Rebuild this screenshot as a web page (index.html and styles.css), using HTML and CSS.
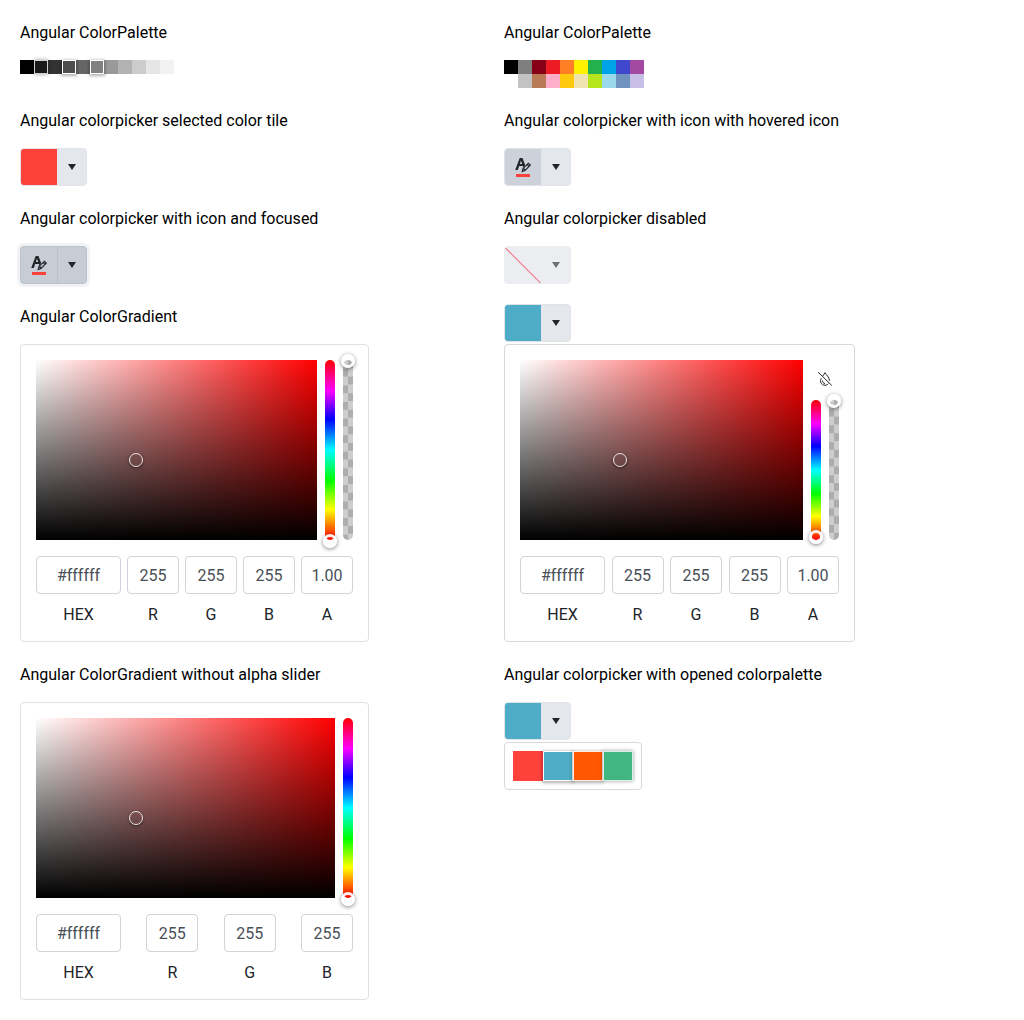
FILE: index.html
```html
<!DOCTYPE html>
<html lang="en">
<head>
<meta charset="utf-8">
<title>Angular color components</title>
<link rel="stylesheet" href="styles.css">
</head>
<body>
<svg class="defs" width="0" height="0">
  <symbol id="font-color" viewBox="0 0 16 20">
    <path d="M.2 13 4.700 1h2.800l2.700 7.300-1.900 1.900-.5-1.200H4.100L2.800 13zM4.900 7h2.300L6 3.500z" fill="currentColor"/>
    <path d="M7.300 14.500l.8-3.100 5.300-5.100 1.900 1.900-5.300 5.300zM8.500 11.500l1.500 1.500M12.300 7.600l1.700 1.700" fill="none" stroke="currentColor" stroke-width="1.150"/>
    <path class="bar" d="M1 17h14v3H1z"/>
  </symbol>
  <symbol id="droplet-slash" viewBox="0 0 16 16">
    <path d="M5.700 5.100C6.500 3.800 7.400 2.700 8 1.700c1.700 2.600 4.500 5 4.500 8M11.300 12.700C9.500 15.200 3.500 14.900 3.500 9.700c0-.8.300-1.700.8-2.500M5.500 9.500c0 2 1.100 3 2.500 3M1.200 1.200l13.600 13.300" fill="none" stroke="currentColor"/>
  </symbol>
</svg>
<main class="grid">
  <section>
    <h2>Angular ColorPalette</h2>
    <div class="palette gray">
      <i style="background:#000"></i><i class="hover" style="background:#1a1a1a"></i><i style="background:#333"></i><i class="selected" style="background:#4d4d4d"></i><i style="background:#666"></i><i class="selected" style="background:#808080"></i><i style="background:#999"></i><i style="background:#b3b3b3"></i><i style="background:#ccc"></i><i style="background:#e6e6e6"></i><i style="background:#f2f2f2"></i>
    </div>
  </section>
  <section>
    <h2>Angular ColorPalette</h2>
    <div class="palette basic">
      <i style="background:#000"></i><i style="background:#7f7f7f"></i><i style="background:#880015"></i><i style="background:#ed1c24"></i><i style="background:#ff7f27"></i><i style="background:#fff200"></i><i style="background:#22b14c"></i><i style="background:#00a2e8"></i><i style="background:#3f48cc"></i><i style="background:#a349a4"></i>
      <i style="background:#fff"></i><i style="background:#c3c3c3"></i><i style="background:#b97a57"></i><i style="background:#ffaec9"></i><i style="background:#ffc90e"></i><i style="background:#efe4b0"></i><i style="background:#b5e61d"></i><i style="background:#99d9ea"></i><i style="background:#7092be"></i><i style="background:#c8bfe7"></i>
    </div>
  </section>

  <section>
    <h2>Angular colorpicker selected color tile</h2>
    <div class="picker"><span class="face red"></span><span class="toggle"></span></div>
  </section>
  <section>
    <h2>Angular colorpicker with icon with hovered icon</h2>
    <div class="picker"><span class="face hovered"><svg width="16" height="20"><use href="#font-color"/></svg></span><span class="toggle"></span></div>
  </section>

  <section>
    <h2>Angular colorpicker with icon and focused</h2>
    <div class="picker focused"><span class="face"><svg width="16" height="20"><use href="#font-color"/></svg></span><span class="toggle"></span></div>
  </section>
  <section>
    <h2>Angular colorpicker disabled</h2>
    <div class="picker disabled"><span class="face"><svg width="36" height="36"><path d="M0 .5 36 36.500" stroke="#dc3545" stroke-width="1.100"/></svg></span><span class="toggle"></span></div>
  </section>

  <section>
    <h2>Angular ColorGradient</h2>
    <div class="panel">
      <div class="canvas">
        <div class="saturation"><b class="pointer"></b></div>
        <div class="track hue"><b class="thumb low"></b></div>
        <div class="track alpha"><b class="thumb"></b></div>
      </div>
      <div class="inputs">
        <label class="hex"><span class="field">#ffffff</span>HEX</label>
        <label><span class="field">255</span>R</label>
        <label><span class="field">255</span>G</label>
        <label><span class="field">255</span>B</label>
        <label><span class="field">1.00</span>A</label>
      </div>
    </div>
  </section>
  <section>
    <div class="picker"><span class="face teal"></span><span class="toggle"></span></div>
    <div class="panel popup">
      <div class="canvas">
        <div class="saturation"><b class="pointer"></b></div>
        <div class="controls">
          <span class="clear"><svg width="16" height="16"><use href="#droplet-slash"/></svg></span>
          <div class="track hue"><b class="thumb end"></b></div>
          <div class="track alpha"><b class="thumb"></b></div>
        </div>
      </div>
      <div class="inputs">
        <label class="hex"><span class="field">#ffffff</span>HEX</label>
        <label><span class="field">255</span>R</label>
        <label><span class="field">255</span>G</label>
        <label><span class="field">255</span>B</label>
        <label><span class="field">1.00</span>A</label>
      </div>
    </div>
  </section>

  <section>
    <h2>Angular ColorGradient without alpha slider</h2>
    <div class="panel">
      <div class="canvas">
        <div class="saturation"><b class="pointer"></b></div>
        <div class="track hue"><b class="thumb low"></b></div>
      </div>
      <div class="inputs">
        <label class="hex"><span class="field">#ffffff</span>HEX</label>
        <label><span class="field">255</span>R</label>
        <label><span class="field">255</span>G</label>
        <label><span class="field">255</span>B</label>
      </div>
    </div>
  </section>
  <section>
    <h2>Angular colorpicker with opened colorpalette</h2>
    <div class="picker"><span class="face teal"></span><span class="toggle"></span></div>
    <div class="popup swatches">
      <div class="palette large"><i class="red"></i><i class="teal selected"></i><i class="orange selected-hover"></i><i class="green hover"></i></div>
    </div>
  </section>
</main>
</body>
</html>
```
FILE: styles.css
```css
* { box-sizing: border-box; }
body { margin: 0; background: #fff; color: #000; font: 400 16px/24px Roboto, sans-serif; }
.defs { position: absolute; }
.grid { display: grid; grid-template-columns: 484px 1fr; row-gap: 20px; padding: 20px; }
h2 { margin: 0 0 15px; padding-top: 1px; font-size: 16px; font-weight: 400; line-height: 24px; }

.palette { --tile: 14px; display: grid; grid-auto-rows: var(--tile); }
.gray { grid-template-columns: repeat(11, var(--tile)); height: 28px; }
.basic { grid-template-columns: repeat(10, var(--tile)); }
.large { --tile: 30px; grid-template-columns: repeat(4, var(--tile)); }
.hover { z-index: 2; box-shadow: 0 0 4px rgba(0,0,0,.4), inset 0 0 0 1px rgba(255,255,255,.8); }
.selected { z-index: 1; box-shadow: 0 1px 3px 1px rgba(0,0,0,.3), inset 0 0 0 1px #fff; }
.selected-hover { z-index: 1; box-shadow: 0 1px 3px 1px rgba(0,0,0,.3), inset 0 0 0 1px rgba(255,255,255,.9); }
.red { background: #ff413c; }
.teal { background: #4eacc6; }
.orange { background: #ff5800; }
.green { background: #43b581; }

.picker { display: flex; width: 67px; height: 38px; border: 1px solid #e0e3e8; border-radius: 4px; overflow: hidden; background: #e4e7eb; color: #212529; }
.face { display: flex; align-items: center; justify-content: center; width: 36px; height: 36px; }
.face svg { display: block; }
.hovered { background: #cdd2da; }
.toggle { display: flex; flex: 1; align-items: center; justify-content: center; }
.toggle::before { content: ""; border: 4px solid transparent; border-top: 6px solid currentColor; border-bottom: 0; }
.bar { fill: #ff413c; }
.focused { background: #c7cdd5; border-color: #bbc2cc; box-shadow: 0 0 0 3px #f1f2f4; }
.focused .toggle { border-left: 1px solid #bbc2cc; }
.disabled { opacity: .65; background: #e1e4e9; }

.panel { width: 349px; height: 298px; padding: 15px; border: 1px solid #dee2e6; border-radius: 4px; background: #fff; }
.popup { margin-top: 2px; border: 1px solid #d9d9d9; border-radius: 4px; background: #fff; }
.panel.popup { width: 351px; }
.swatches { width: 138px; padding: 8px; }
.canvas { display: flex; gap: 8px; height: 180px; }
.saturation { position: relative; flex: 1; background: linear-gradient(to top, #000, transparent), linear-gradient(to right, #fff, transparent), #f00; }
.pointer { position: absolute; left: 93px; top: 93px; width: 14px; height: 14px; border: 1px solid rgba(255,255,255,.85); border-radius: 50%; box-shadow: 0 1px 3px rgba(0,0,0,.5); }
.track { position: relative; width: 10px; border-radius: 5px; }
.hue { background: linear-gradient(to top, #f00, #ff0 17%, #0f0 33%, #0ff 50%, #00f 67%, #f0f 83%, #f00); }
.alpha { background: conic-gradient(#adadad 25%, #cdcdcd 0 50%, #adadad 0 75%, #cdcdcd 0) 0 0 / 10px 16.600px; }
.thumb { position: absolute; left: -2px; top: -6px; width: 14px; height: 14px; border: 3px solid rgba(255,255,255,.92); border-radius: 50%; box-shadow: 0 1px 4px rgba(0,0,0,.5); }
.low { top: 174px; }
.end { top: 130px; }
.controls { display: grid; grid-template: 40px 140px / 10px 10px; column-gap: 8px; }
.clear { grid-column: 1 / -1; display: flex; align-items: center; justify-content: center; height: 38px; color: #212529; }
.inputs { display: flex; justify-content: space-between; margin-top: 16px; color: #212529; }
.inputs label { width: 52px; text-align: center; }
.inputs .hex { width: 85px; }
.field { display: block; height: 38px; margin-bottom: 9px; border: 1px solid #ced4da; border-radius: 4px; line-height: 38px; color: #495057; }
```
